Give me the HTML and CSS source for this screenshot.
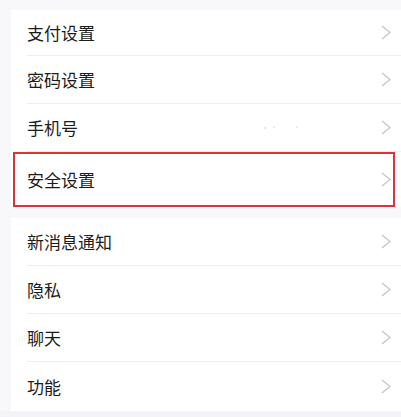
FILE: index.html
```html
<!DOCTYPE html>
<html lang="zh-CN">
<head>
<meta charset="utf-8">
<title>设置</title>
<link rel="stylesheet" href="styles.css">
</head>
<body>
<div class="page">
  <div class="card">
    <div class="row first"><div class="inner"><span class="label">支付设置</span><svg class="chev" viewBox="0 0 10 15"><polyline points="1,1 9,7.5 1,14"/></svg></div></div>
    <div class="row"><div class="inner"><span class="label">密码设置</span><svg class="chev" viewBox="0 0 10 15"><polyline points="1,1 9,7.5 1,14"/></svg></div></div>
    <div class="row"><div class="inner"><span class="label">手机号</span><span class="value">· ˙ &nbsp; &nbsp; &nbsp; &nbsp; ˙</span><svg class="chev" viewBox="0 0 10 15"><polyline points="1,1 9,7.5 1,14"/></svg></div></div>
    <div class="row tall highlighted"><div class="inner last"><span class="label">安全设置</span><svg class="chev" viewBox="0 0 10 15"><polyline points="1,1 9,7.5 1,14"/></svg></div><div class="mark"></div></div>
  </div>
  <div class="card second">
    <div class="row"><div class="inner"><span class="label">新消息通知</span><svg class="chev" viewBox="0 0 10 15"><polyline points="1,1 9,7.5 1,14"/></svg></div></div>
    <div class="row"><div class="inner"><span class="label">隐私</span><svg class="chev" viewBox="0 0 10 15"><polyline points="1,1 9,7.5 1,14"/></svg></div></div>
    <div class="row"><div class="inner"><span class="label">聊天</span><svg class="chev" viewBox="0 0 10 15"><polyline points="1,1 9,7.5 1,14"/></svg></div></div>
    <div class="row end"><div class="inner last"><span class="label">功能</span><svg class="chev" viewBox="0 0 10 15"><polyline points="1,1 9,7.5 1,14"/></svg></div></div>
  </div>
</div>
</body>
</html>
```

FILE: styles.css
```css
html, body {
  margin: 0;
  padding: 0;
  background: #f4f4f8;
}
body {
  font-family: "Noto Sans CJK SC", "Noto Sans", sans-serif;
  color: #1c1c1c;
}
.page {
  padding: 10px 0 0 11px;
  background: linear-gradient(to right, #f8f8fa 11px, transparent 11px);
}
.page {
  background-color: #f8f8fa;
}
.card {
  background: #ffffff;
}
.card.second {
  margin-top: 11px;
}
.row {
  position: relative;
  padding-left: 16px;
}
.inner {
  display: flex;
  align-items: center;
  height: 47px;
  border-bottom: 1px solid #ededf0;
  padding-right: 10px;
}
.row.first .inner {
  height: 45px;
}
.row.tall .inner {
  height: 55px;
}
.row.end .inner {
  height: 49px;
}
.inner.last {
  border-bottom: none;
}
.label {
  font-size: 17px;
  line-height: 20px;
  letter-spacing: 0;
}
.value {
  margin-left: auto;
  margin-right: 82px;
  font-size: 9px;
  color: #e4e4e8;
}
.chev {
  margin-left: auto;
  width: 10px;
  height: 15px;
  fill: none;
  stroke: #c6c6ca;
  stroke-width: 1.3;
}
.value + .chev {
  margin-left: 0;
}
.mark {
  position: absolute;
  top: 0;
  bottom: 0;
  left: 2px;
  right: 6px;
  border: 2px solid #d8343d;
  pointer-events: none;
}
```
